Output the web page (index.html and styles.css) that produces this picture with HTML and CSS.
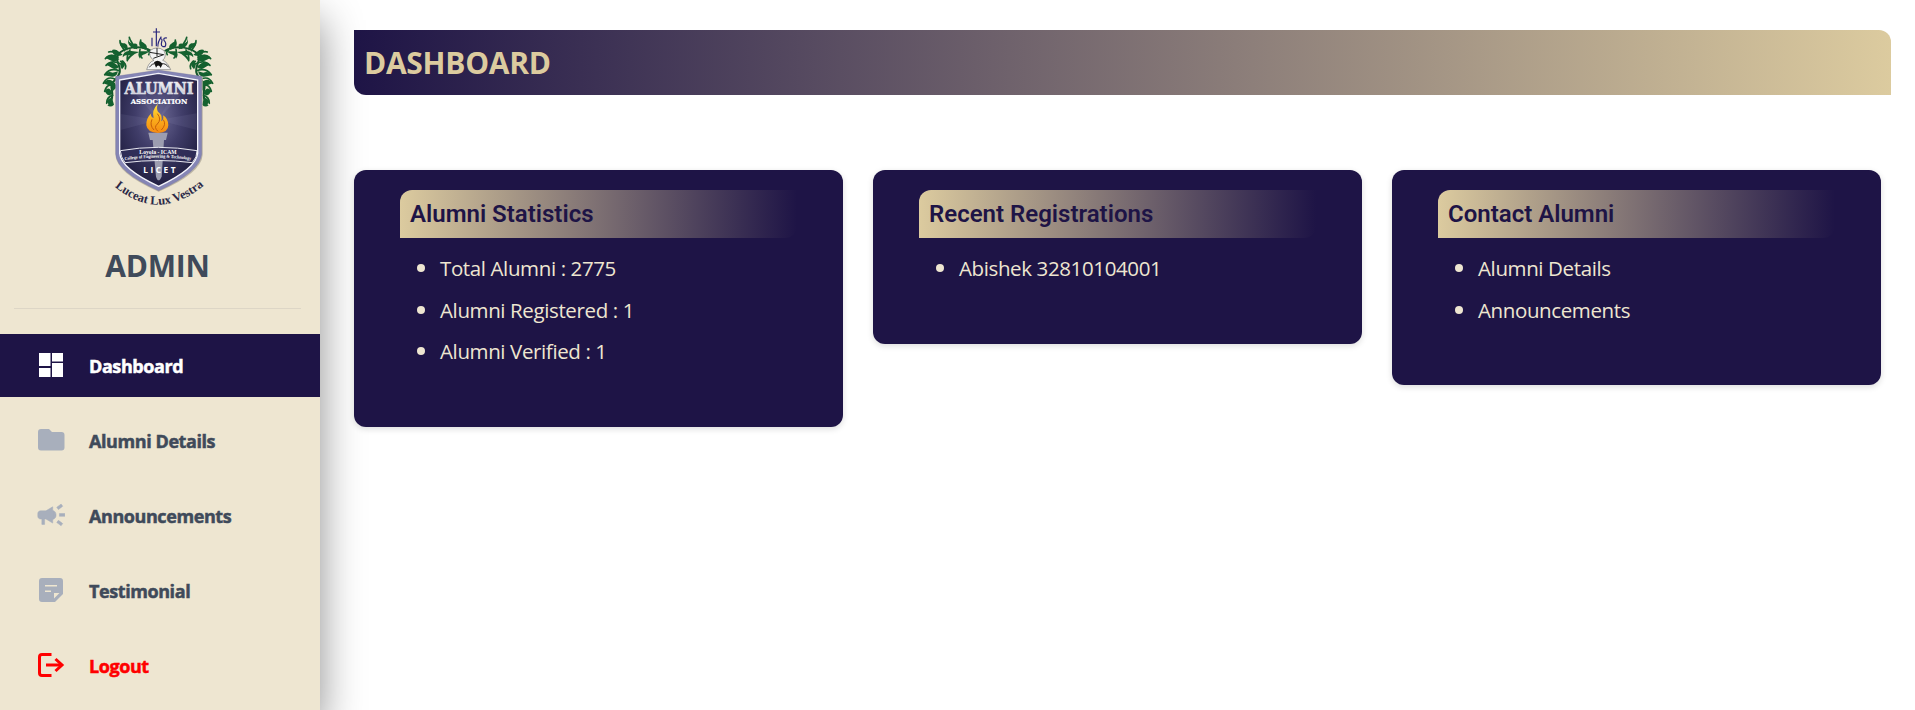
FILE: index.html
```
<!DOCTYPE html>
<html lang="en">
<head>
<meta charset="utf-8">
<title>Dashboard</title>
<link rel="stylesheet" href="styles.css">
</head>
<body>
<div class="layout">
  <aside class="sidebar">
    <svg class="crest" viewBox="0 0 420 600" role="img" aria-label="Alumni Association crest">
      <defs>
        <radialGradient id="field" cx="50%" cy="38%" r="60%">
          <stop offset="0" stop-color="#6b6894"/><stop offset=".5" stop-color="#403d69"/><stop offset="1" stop-color="#232144"/>
        </radialGradient>
        <linearGradient id="flame" x1="0" y1="0" x2="0" y2="1">
          <stop offset="0" stop-color="#ffe23a"/><stop offset=".5" stop-color="#fbb01c"/><stop offset="1" stop-color="#f58a12"/>
        </linearGradient>
        <linearGradient id="steel" x1="0" y1="0" x2="0" y2="1">
          <stop offset="0" stop-color="#ffffff"/><stop offset="1" stop-color="#b9bac6"/>
        </linearGradient>
        <path id="motto" d="M74 500Q205 610 344 495"/>
        <path id="ribbonText" d="M104 421Q205 405 310 421"/>
        <g id="vine">
          <path class="stem" d="M184 93C160 78 118 78 92 96C64 116 98 136 88 160C80 186 58 180 66 212C70 232 64 244 58 254"/>
          <path class="curl" d="M134 84C126 66 120 62 118 52M126 76Q136 70 140 76M104 92C96 80 90 74 90 62M160 84Q150 72 152 60M120 90Q110 104 112 122M150 88Q146 104 156 114M84 102Q66 92 56 96M84 112Q60 98 46 116M92 132Q66 118 48 136M88 152Q60 142 44 164M76 178Q52 166 40 190M66 196Q50 192 44 214M68 226Q50 230 50 250M92 124Q112 128 106 146M82 176Q96 184 88 204M172 90Q182 96 176 104"/>
          <path class="leaf" d="M116 51Q112 68 128 71Q144 72 142 88Q130 86 122 80Q110 70 116 51ZM90 62Q86 76 98 82L112 92Q116 74 104 70Q92 70 90 62ZM150 62Q144 72 152 82L166 90Q174 84 168 74Q160 66 150 62ZM118 92Q98 94 98 112Q106 102 120 106Q110 112 112 124Q124 108 134 102L148 96ZM150 94Q140 104 150 116Q152 106 166 102L180 94ZM66 90Q76 86 88 96L98 104Q80 112 70 102ZM46 114Q58 100 76 106L88 118Q74 128 64 122Q54 118 46 114ZM48 134Q60 122 74 130L88 140Q76 152 66 144Q58 138 48 134ZM42 166Q52 152 68 158L84 154Q80 172 66 170Q54 168 42 166ZM96 120Q108 124 104 138L96 148Q86 134 96 120ZM40 190Q50 174 66 182L76 190Q66 202 56 196ZM70 190Q82 192 78 204L68 214Q62 200 70 190ZM44 214Q52 200 62 210L68 220Q58 230 50 222ZM50 246Q56 232 66 234L72 254Q62 264 52 256Q60 254 50 246Z"/>
        </g>
      </defs>
      <use href="#vine"/>
      <use href="#vine" transform="matrix(-1 0 0 1 408 0)"/>
      <path class="monogram" d="M199 25V79M189 36H210M186 53V79M214 50Q202 68 204 80M212 55Q218 57 215 66Q211 80 222 80M231 54Q219 52 222 61Q231 70 225 80H218"/>
      <path class="helm" d="M181 91Q202 76 222 92Q231 110 218 121Q232 125 242 149H170Q176 126 192 121Q174 110 181 91Z"/>
      <path class="ink" d="M192 127Q204 116 218 131L212 144Q205 130 198 143Z"/>
      <path class="visor" d="M179 97L221 104L190 115M201 84V109M178 142Q188 128 198 132M236 142Q226 128 214 132"/>
      <path class="shield-shadow" d="M77 172L205 151L338 172V405Q334 460 206 515Q79 460 77 405Z"/>
      <path class="shield-rim" d="M77 169L205 150L335 169V402Q331 455 206 512Q79 455 77 402Z"/>
      <path class="shield" d="M89 180L205 160L323 180V400Q318 446 206 499Q93 446 89 400Z"/>
      <path class="rays" d="M204 300L110 190H150ZM204 300L268 190H304ZM204 300L92 282V330ZM204 300L320 280V330Z"/>
      <path class="torch" d="M175 338H233L228 360H222L215 470Q205 492 198 470L188 360H180Z"/>
      <path class="flame" d="M204 251Q184 270 191 294Q180 290 184 280Q168 295 169 316Q172 338 204 339Q235 338 235 316Q235 296 219 286Q223 300 213 304Q220 286 204 275Q198 265 204 251Z"/>
      <path class="flame-line" d="M202 281Q216 298 202 312Q190 322 204 334M186 298Q178 316 192 330M220 299Q230 314 214 330"/>
      <path class="scroll" d="M91 392Q205 372 321 392Q322 411 307 428Q205 415 105 428Q92 411 91 392Z"/>
      <g text-anchor="middle">
        <text class="crest-title" x="207" y="223" textLength="207" lengthAdjust="spacingAndGlyphs">ALUMNI</text>
        <text class="crest-subtitle" x="207" y="251" textLength="170" lengthAdjust="spacingAndGlyphs">ASSOCIATION</text>
        <text class="crest-school" x="204" y="402" textLength="112" lengthAdjust="spacingAndGlyphs">Loyola - ICAM</text>
        <text class="crest-name" x="208" y="460" textLength="97">LICET</text>
      </g>
      <text class="crest-college"><textPath href="#ribbonText" textLength="200" lengthAdjust="spacingAndGlyphs">College of Engineering &amp; Technology</textPath></text>
      <text class="crest-motto"><textPath href="#motto" textLength="296" lengthAdjust="spacingAndGlyphs">Luceat Lux Vestra</textPath></text>
    </svg>
    <h2 class="role">ADMIN</h2>
    <hr class="divider">
    <nav class="menu">
      <a class="item active"><svg class="icon" viewBox="0 0 28 28"><path d="M2 2h11.500v13H2zM15 2h11v8.500H15zM2 17h11.500v9H2zM15 12h11v14H15z"/></svg><span>Dashboard</span></a>
      <a class="item"><svg class="icon" viewBox="0 0 28 28"><path d="M4 3h8l3 3h9.500Q27.500 6 27.500 9v12.500q0 3-3 3H4q-3 0-3-3V6q0-3 3-3z"/></svg><span>Alumni Details</span></a>
      <a class="item"><svg class="icon heavy" viewBox="1.400 1.700 20.700 20.700"><path d="M18 11v2h4v-2h-4zm-2 6.610c.96.71 2.210 1.650 3.200 2.390.4-.53.8-1.070 1.200-1.600-.99-.74-2.240-1.680-3.200-2.400-.4.54-.8 1.080-1.200 1.610zM20.400 5.600c-.4-.53-.8-1.070-1.200-1.600-.99.74-2.240 1.680-3.200 2.400.4.530.8 1.070 1.200 1.600.96-.72 2.210-1.650 3.200-2.400zM4 9c-1.100 0-2 .9-2 2v2c0 1.100.9 2 2 2h1v4h2v-4h1l5 3V6L8 9H4zm9-.35v6.690c1.900-.4 2.500-2.010 2.500-3.340s-.6-2.900-2.500-3.350z"/></svg><span>Announcements</span></a>
      <a class="item"><svg class="icon" viewBox="0 0 28 28"><path fill-rule="evenodd" d="M5 2h18q3 0 3 3v13l-8 8H5q-3 0-3-3V5q0-3 3-3zM8 9v1.500h12V9zM8 14.500V16h6v-1.500zM17 17v5.500l5.500-5.500z"/></svg><span>Testimonial</span></a>
      <a class="item logout"><svg class="icon line" viewBox="0 0 28 28"><path d="M14.500 3.500H5Q2.500 3.500 2.500 6v16q0 2.500 2.500 2.500h9.500M9 14h16"/><path d="M18.500 8L25 14l-6.500 6"/></svg><span>Logout</span></a>
    </nav>
  </aside>
  <main class="content">
    <header class="banner"><h1>DASHBOARD</h1></header>
    <section class="cards">
      <article class="card"><h3>Alumni Statistics</h3><ul><li>Total Alumni : 2775</li><li>Alumni Registered : 1</li><li>Alumni Verified : 1</li></ul></article>
      <article class="card"><h3>Recent Registrations</h3><ul><li>Abishek 32810104001</li></ul></article>
      <article class="card"><h3>Contact Alumni</h3><ul><li>Alumni Details</li><li>Announcements</li></ul></article>
    </section>
  </main>
</div>
</body>
</html>
```
FILE: styles.css
```
* { box-sizing: border-box; }
body { margin: 0; background: #fff; font-family: "Open Sans", "Noto Sans", sans-serif; }
.layout { display: flex; height: 710px; overflow: hidden; }
.sidebar { flex: 0 0 320px; height: 710px; background: #eee6d1; box-shadow: 0 20px 40px rgba(0,0,0,.45); }
.crest { display: block; width: 140px; height: 200px; margin: 20px 0 0 90px; }
.role { margin: 26px 0 0; padding-right: 5px; text-align: center; font-size: 30px; line-height: 40px; letter-spacing: -.2px; font-weight: 700; color: #3f4a5a; }
.divider { margin: 22px 19px 0 14px; border: 0; height: 1px; background: #ddd6c6; }
.menu { display: flex; flex-direction: column; gap: 12px; margin-top: 25px; }
.item { display: flex; align-items: center; height: 63px; padding: 1px 0 0 37px; gap: 24px; font-size: 18px; font-weight: 700; letter-spacing: -.42px; -webkit-text-stroke: .5px currentColor; line-height: 28px; color: #3f4a5a; }
.icon { width: 28px; height: 28px; margin-bottom: 2px; fill: #a8afbc; }
.icon.heavy { stroke: #a8afbc; stroke-width: .4; }
.item.active { background: #1e1446; color: #fff; }
.active .icon { fill: #fff; }
.item.logout { color: #f00; }
.icon.line { fill: none; stroke: #f00; stroke-width: 3; }

.content { flex: 1; padding: 30px 24px 0 34px; }
.banner { height: 65px; padding: 1px 0 0 10px; display: flex; align-items: center; border-radius: 0 12px; background: linear-gradient(90deg, #1e1446, #dccb9f); }
.banner h1 { margin: 0; font-size: 30px; line-height: 40px; letter-spacing: -.28px; font-weight: 700; color: #dccb9f; }
.cards { display: flex; align-items: flex-start; gap: 30px; margin-top: 75px; }
.card { width: 489px; padding: 20px 46px 55px; border-radius: 12px; background: #1e1446; box-shadow: 0 2px 6px rgba(0,0,0,.14); }
.card h3 { margin: 0 0 9px; height: 48px; padding-left: 10px; border-radius: 12px 0; background: linear-gradient(90deg, #dccb9f, #1e1446); color: #1e1446; font-family: Roboto, sans-serif; font-size: 24px; line-height: 48px; font-weight: 600; }
.card ul { margin: 0; padding-left: 40px; color: #eee6d1; font-size: 20.500px; letter-spacing: -.38px; line-height: 41.500px; }
.card li { height: 41.500px; }
.card li::marker { font-size: 23px; }

.stem { fill: none; stroke: #14552c; stroke-width: 6; }
.curl { fill: none; stroke: #14612f; stroke-width: 5; stroke-linecap: round; }
.leaf { fill: #14612f; }
.monogram { fill: none; stroke: #26247b; stroke-width: 3.500; }
.helm { fill: #f4f4f4; stroke: #777; stroke-width: 2; }
.ink { fill: #111; }
.visor { fill: none; stroke: #222; stroke-width: 3; }
.shield-shadow { fill: #bdb6a5; }
.shield-rim { fill: #8585b5; stroke: #71719e; stroke-width: 1; }
.shield { fill: url(#field); stroke: #f4f4fb; stroke-width: 4; }
.rays { fill: #aaa8cf; opacity: .1; }
.torch { fill: #9c9db0; }
.flame { fill: url(#flame); }
.flame-line { fill: none; stroke: #c45d0b; stroke-width: 3; }
.scroll { fill: #302e58; fill-opacity: .85; stroke: #e9e9f1; stroke-width: 3; }
.crest-title { font: 700 52px "DejaVu Serif", serif; fill: url(#steel); stroke: #e4e4ec; stroke-width: 2; }
.crest-subtitle { font: 700 24px "DejaVu Serif", serif; fill: #fff; stroke: #fff; stroke-width: .6; }
.crest-school { font: 700 18px "Liberation Serif", serif; fill: #fff; }
.crest-college { font: 700 14px "Liberation Serif", serif; fill: #fff; }
.crest-name { font: 700 25px "Open Sans", sans-serif; fill: #fff; }
.crest-motto { font: 700 37px "Liberation Serif", serif; fill: #2b2947; }
```
